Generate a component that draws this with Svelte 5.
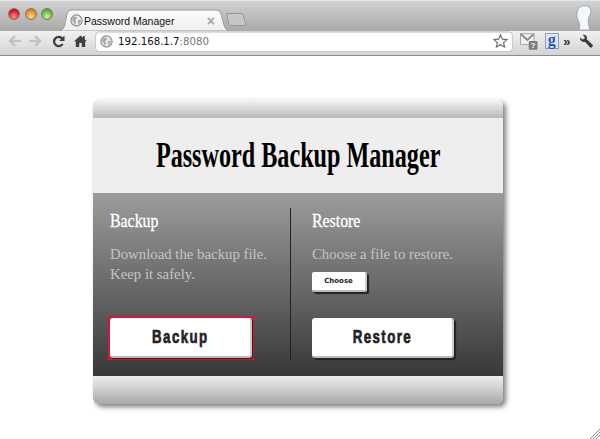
<script>
	let title = "Password Manager";
</script>

<div class="browser">
	<div class="tabbar">
		<div class="lights">
			<span class="light red"></span>
			<span class="light amber"></span>
			<span class="light green"></span>
		</div>
		<div class="tab">
			<svg class="tab-bg" width="170" height="22" viewBox="0 0 170 22">
				<defs>
					<linearGradient id="tabfill" x1="0" y1="0" x2="0" y2="1">
						<stop offset="0" stop-color="#fbfbfb" />
						<stop offset="1" stop-color="#efefef" />
					</linearGradient>
				</defs>
				<path d="M0 22 C4 21 5 19 6 15 L8 5 C9 2 10 1 13 1 L157 1 C160 1 161 2 162 5 L165 16 C166 20 168 21 170 22 Z" fill="url(#tabfill)" stroke="#9a9a9a" stroke-width="1" />
			</svg>
			<svg class="globe" width="13" height="13" viewBox="0 0 13 13">
				<circle cx="6.5" cy="6.5" r="5.6" fill="#e8e8e8" stroke="#8a8a8a" stroke-width="1.1" />
				<path d="M3 3 L6 2.5 L7 4.5 L5 6 L6 8.5 L5 11 L3.5 8 L2 6 Z M8 6 L11 6 L10 9.5 L8.5 10.5 Z" fill="#a8a8a8" />
			</svg>
			<span class="tab-title">{title}</span>
			<span class="tab-close">×</span>
		</div>
		<svg class="newtab" width="21" height="13" viewBox="0 0 21 13">
			<path d="M0.5 0.5 L15 0.5 C16 0.5 17 1 17.5 3 L20 12.5 L4 12.5 C3 12.5 2.8 11.5 2.5 10 Z" fill="#c6c6c6" stroke="#979797" />
		</svg>
		<svg class="avatar" width="19" height="25" viewBox="0 0 19 25">
			<path d="M5 25 C6 21 6 19 5 17 C2 13 2 5 6 2 C9 0 14 0 16 3 C18 6 16 10 14.5 13 C14 17 14.5 21 16 25 Z" fill="#f4f7f9" stroke="#8f999f" stroke-width="0.8" />
		</svg>
	</div>

	<div class="toolbar">
		<svg class="nav" width="14" height="12" viewBox="0 0 14 12"><path d="M7 1 L2 6 L7 11 M2 6 L13 6" fill="none" stroke="#c2c2c2" stroke-width="2.4" /></svg>
		<svg class="nav fwd" width="14" height="12" viewBox="0 0 14 12"><path d="M7 1 L12 6 L7 11 M12 6 L1 6" fill="none" stroke="#c2c2c2" stroke-width="2.4" /></svg>
		<svg class="nav reload" width="13" height="13" viewBox="0 0 13 13"><path d="M10.6 9 A4.6 4.6 0 1 1 10.2 3.6" fill="none" stroke="#3f3f3f" stroke-width="2.3" /><path d="M12.5 0.5 L12.5 6 L7.2 6 Z" fill="#3f3f3f" /></svg>
		<svg class="nav home" width="13" height="12" viewBox="0 0 13 12"><path d="M6.5 0.5 L9 2.7 L9 1 L10.7 1 L10.7 4.2 L13 6.2 L11.2 6.2 L11.2 12 L7.8 12 L7.8 8 L5.2 8 L5.2 12 L1.8 12 L1.8 6.2 L0 6.2 Z" fill="#3f3f3f" /></svg>

		<div class="omnibox">
			<svg width="13" height="13" viewBox="0 0 13 13">
				<circle cx="6.5" cy="6.5" r="5.6" fill="#e8e8e8" stroke="#8a8a8a" stroke-width="1.1" />
				<path d="M3 3 L6 2.5 L7 4.5 L5 6 L6 8.5 L5 11 L3.5 8 L2 6 Z M8 6 L11 6 L10 9.5 L8.5 10.5 Z" fill="#a8a8a8" />
			</svg>
			<span class="url">192.168.1.7<span class="port">:8080</span></span>
			<svg class="star" width="15" height="14" viewBox="0 0 15 14"><path d="M7.5 1 L9.4 5.2 L14 5.6 L10.6 8.6 L11.6 13 L7.5 10.7 L3.4 13 L4.4 8.6 L1 5.6 L5.6 5.2 Z" fill="#fff" stroke="#6e6e6e" stroke-width="1.2" /></svg>
		</div>

		<svg class="ext mail" width="18" height="18" viewBox="0 0 18 18">
			<rect x="0.5" y="1.5" width="14" height="11" fill="#f1f1f1" stroke="#a3a3a3" />
			<path d="M1 2 L7.5 8 L14 2" fill="none" stroke="#8c8c8c" stroke-width="2" />
			<rect x="9" y="9" width="9" height="9" rx="1" fill="#7d7d7d" />
			<text x="13.5" y="16.5" class="q">?</text>
		</svg>
		<div class="ext gbox">g</div>
		<span class="more">»</span>
		<svg class="wrench" width="15" height="15" viewBox="0 0 15 15"><path d="M1 3.5 L3.5 5.5 L5.5 4.8 L5.8 2.5 L3.8 0.8 C6 0 8.2 1.2 8.2 3.8 L8 5.2 L14 10.8 C15 12 13 14.6 11.6 13.6 L6 7.8 C3.5 8.6 0.8 7 1 3.5 Z" fill="#3c3c3c" /></svg>
	</div>

	<main class="page">
		<section class="card">
			<div class="strip"></div>
			<header class="head">
				<h1>Password Backup Manager</h1>
			</header>
			<div class="panes">
				<div class="pane left">
					<h2>Backup</h2>
					<p>Download the backup file.<br />Keep it safely.</p>
					<span class="focus-ring"><button class="big"><span class="label">Backup</span></button></span>
				</div>
				<div class="pane right">
					<h2>Restore</h2>
					<p>Choose a file to restore.</p>
					<button class="small">Choose</button>
					<button class="big"><span class="label">Restore</span></button>
				</div>
			</div>
			<div class="foot"></div>
		</section>
	</main>

	<svg class="grip" width="11" height="11" viewBox="0 0 11 11">
		<path d="M11 1 L1 11 M11 4 L4 11 M11 7 L7 11" stroke="#8f8f8f" stroke-width="1" />
	</svg>
</div>

<style>
	:global(body) {
		margin: 0;
		background: #fff;
	}

	.browser {
		position: relative;
		width: 600px;
		height: 439px;
		overflow: hidden;
		background: #fff;
	}

	.tabbar {
		display: flex;
		align-items: flex-start;
		height: 31px;
		box-sizing: border-box;
		background: linear-gradient(#d2d2d2, #a9a9a9);
		border-top: 1px solid #e4e4e4;
	}

	.lights {
		display: flex;
		gap: 4.5px;
		padding: 7px 0 0 8px;
	}

	.light {
		width: 12px;
		height: 12px;
		border-radius: 50%;
		border: 0.5px solid #777;
		box-sizing: border-box;
	}

	.red { background: radial-gradient(circle at 50% 75%, #ff8f8f, #d8141c 65%, #8e1015); }
	.amber { background: radial-gradient(circle at 50% 75%, #ffd98a, #e58a1e 65%, #a8641a); }
	.green { background: radial-gradient(circle at 50% 75%, #cdf59a, #62b52c 65%, #3f7f1d); }

	.tab {
		position: relative;
		display: flex;
		align-items: center;
		width: 170px;
		height: 22px;
		margin: 8px 0 0 6px;
		box-sizing: border-box;
		padding: 1px 14px 0 11px;
		color: #111;
	}

	.tab-bg {
		position: absolute;
		left: 0;
		top: 0;
	}

	.globe {
		position: relative;
		flex: none;
	}

	.tab-title {
		position: relative;
		margin-left: 1px;
		font: 10.5px "Liberation Sans", sans-serif;
		white-space: nowrap;
	}

	.tab-close {
		position: relative;
		margin-left: auto;
		color: #a5a5a5;
		font: bold 14px "Liberation Sans", sans-serif;
	}

	.newtab {
		margin: 12px 0 0 -3px;
	}

	.avatar {
		margin: 4px 7px 0 auto;
	}

	.toolbar {
		display: flex;
		align-items: center;
		height: 25px;
		box-sizing: border-box;
		padding: 0 6px 4px 8px;
		background: linear-gradient(#f1f1f1, #d4d4d4);
		border-bottom: 1px solid #8b8b8b;
	}

	.nav { flex: none; }
	.fwd { margin-left: 6px; }
	.reload { margin-left: 10px; }
	.home { margin-left: 9px; }

	.omnibox {
		display: flex;
		align-items: center;
		width: 416px;
		height: 19px;
		flex: none;
		box-sizing: border-box;
		margin-left: 9px;
		padding: 0 4px;
		background: #fff;
		border-radius: 3px;
		box-shadow: inset 0 1px 1px rgba(0, 0, 0, 0.15), 0 0 0 0.5px #b5b5b5;
	}

	.url {
		margin-left: 5px;
		font: 10.2px "DejaVu Sans", sans-serif;
		color: #111;
	}

	.port { color: #777; }

	.star { margin-left: auto; }

	.mail { margin-left: 8px; }

	.q {
		font: bold 8px "Liberation Sans", sans-serif;
		fill: #fff;
		text-anchor: middle;
	}

	.gbox {
		width: 15px;
		height: 16px;
		margin-left: 7px;
		background: #dfe6f5;
		border: 1px solid #8d9bb8;
		box-sizing: border-box;
		font: bold 16px/11px "Liberation Serif", serif;
		color: #2a55c8;
		text-align: center;
	}

	.more {
		margin-left: 4px;
		font: bold 13px/13px "Liberation Sans", sans-serif;
		color: #333;
	}

	.wrench { margin-left: 9px; }

	.page {
		padding: 43px 0 0 93px;
	}

	.card {
		width: 410px;
		border-radius: 6px;
		overflow: hidden;
		box-shadow: 3px 3px 5px rgba(0, 0, 0, 0.5);
		font-family: "Liberation Serif", serif;
	}

	.strip {
		height: 19px;
		background: linear-gradient(#f7f7f7, #b9b9b9);
	}

	.head {
		display: flex;
		align-items: center;
		justify-content: center;
		height: 75px;
		background: #eeeeee;
	}

	h1 {
		margin: 0;
		font: bold 35px "Liberation Serif", serif;
		color: #000;
		white-space: nowrap;
		transform: scaleX(0.69);
	}

	.panes {
		display: grid;
		grid-template-columns: 198px 1fr;
		height: 183px;
		box-sizing: border-box;
		padding: 15px 0 16px;
		background: linear-gradient(#9c9c9c, #383838);
	}

	.pane {
		display: flex;
		flex-direction: column;
		align-items: flex-start;
	}

	.left {
		padding-left: 17px;
		border-right: 1px solid #222;
	}

	.right {
		padding-left: 21px;
	}

	h2 {
		margin: 3px 0 0;
		font: 400 18px/21px "Liberation Serif", serif;
		color: #fff;
		-webkit-text-stroke: 0.3px #fff;
		transform: scaleX(0.88);
		transform-origin: left center;
	}

	p {
		margin: 12px 0 0;
		font-size: 14.8px;
		line-height: 20px;
		color: #c4c4c4;
	}

	button {
		border: 0;
		background: #fff;
		color: #222;
		cursor: pointer;
		box-shadow: 2px 2px 1px #222;
		border-bottom: 2px solid #bbb;
		border-right: 2px solid #ccc;
		box-sizing: border-box;
		padding: 0;
	}

	.big {
		width: 142px;
		height: 40px;
		margin-top: auto;
		margin-bottom: 2px;
		border-radius: 3px;
		font: bold 19px "Liberation Sans", sans-serif;
		letter-spacing: 2px;
	}

	.label {
		display: inline-block;
		transform: scaleX(0.7);
		-webkit-text-stroke: 0.7px #222;
	}

	.focus-ring {
		display: flex;
		margin: auto 0 0 -2px;
		border: 2px solid #e8102c;
	}

	.focus-ring .big {
		margin: 0;
		box-shadow: 1px 1px 1px #222;
	}

	.small {
		width: 55px;
		height: 20px;
		margin-top: 8px;
		border-radius: 2px;
		font: bold 7px "DejaVu Sans", sans-serif;
	}

	.foot {
		height: 28px;
		background: linear-gradient(#efefef, #a8a8a8);
	}

	.grip {
		position: absolute;
		right: 0;
		bottom: 0;
	}
</style>
